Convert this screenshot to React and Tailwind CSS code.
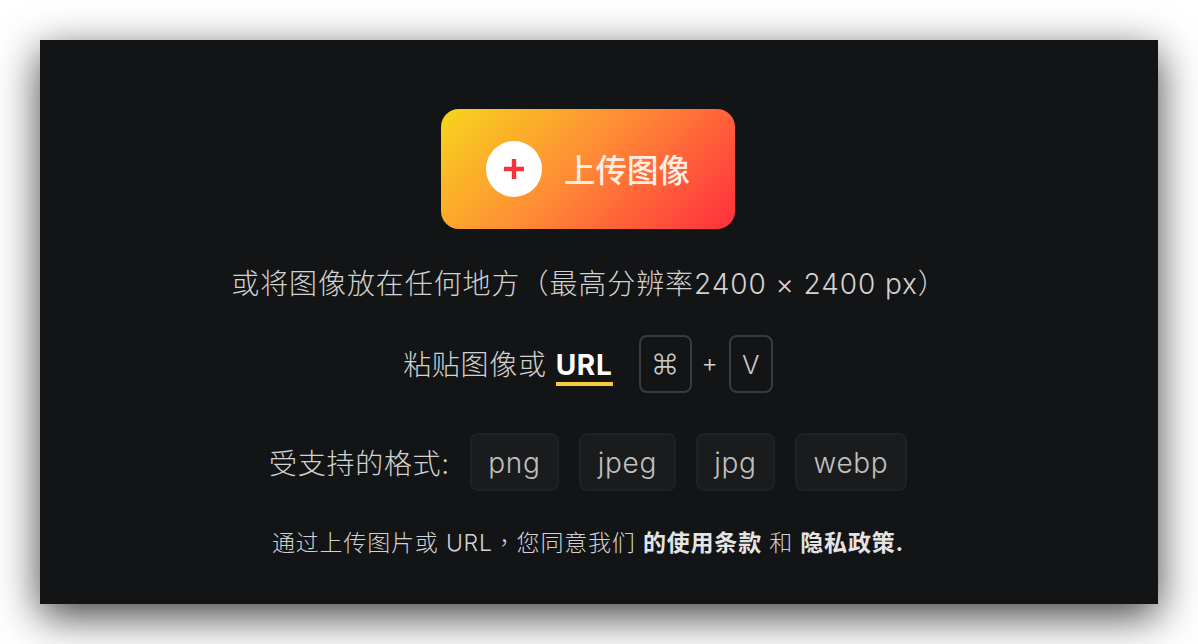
import React from "react";

const FONT = "font-['Inter','Noto_Sans_CJK_SC',sans-serif]";

const formats = [
  { name: "png", width: "w-[89px]" },
  { name: "jpeg", width: "w-[97px]" },
  { name: "jpg", width: "w-[79px]" },
  { name: "webp", width: "w-[112px]" },
];

const KeyCap = ({ children, className }) => (
  <span
    className={`flex h-[58px] items-center justify-center rounded-[8px] border-2 border-[#3a3b3d] text-[#c8c8c8] ${className}`}
  >
    {children}
  </span>
);

const App = () => (
  <div className={`h-[644px] w-[1198px] overflow-hidden bg-white p-10 ${FONT}`}>
    <div className="flex h-[564px] w-[1118px] flex-col items-center bg-[#131416] pt-[69px] pr-[22px] shadow-[0_12px_40px_rgba(0,0,0,0.75)]">
      <button className="flex h-[120px] w-[294px] items-center rounded-[18px] bg-[linear-gradient(135deg,#f7d51c_0%,#ff8d35_46%,#ff2e3e_100%)] pl-[45px]">
        <span className="flex h-14 w-14 items-center justify-center rounded-full bg-white">
          <svg width="20" height="20" viewBox="0 0 20 20">
            <path d="M10 0v20M0 10h20" stroke="#f5333f" strokeWidth="4.4" fill="none" />
          </svg>
        </span>
        <span className="mt-[3px] ml-[22px] text-[31.5px] leading-none font-medium text-[#ffeee4]">上传图像</span>
      </button>

      <p className="mt-[35px] ml-[2px] text-[28px] leading-10 font-light tracking-[0.033em] text-[#d2d2d2]">
        或将图像放在任何地方（最高分辨率2400 × 2400 px）
      </p>

      <div className="mt-[31px] flex h-[58px] items-center text-[28px] font-light tracking-[0.025em] text-[#d2d2d2]">
        <span className="mt-[2px]">粘贴图像或</span>
        <span className="mt-[6px] ml-[9px] border-b-4 border-[#f6cb3b] leading-[34px] font-bold text-white">
          URL
        </span>
        <KeyCap className="ml-[26px] w-[53px] text-[28px] tracking-normal">⌘</KeyCap>
        <span className="mr-[11px] ml-[10px] text-[25px] tracking-normal">+</span>
        <KeyCap className="w-[44px] text-[26px] tracking-normal">V</KeyCap>
      </div>

      <div className="mt-[40px] flex h-[58px] items-center font-light">
        <span className="mt-[3px] mr-[20px] text-[28px] tracking-[0.025em] text-[#d2d2d2]">受支持的格式:</span>
        <div className="flex gap-5">
          {formats.map((format) => (
            <span
              key={format.name}
              className={`flex h-[58px] items-center justify-center rounded-[8px] border-2 border-[#202123] bg-[#1a1b1d] pt-[2px] text-[28px] tracking-[0.025em] text-[#c0c0c0] ${format.width}`}
            >
              {format.name}
            </span>
          ))}
        </div>
      </div>

      <p className="mt-[34px] text-[23px] leading-8 font-light tracking-[0.035em] text-[#d2d2d2]">
        通过上传图片或 URL<span className="font-['Noto_Sans_CJK_TC',sans-serif]">，</span>您同意我们{" "}
        <b className="font-bold text-[#e4e4e4]">的使用条款</b> 和 <b className="font-bold text-[#e4e4e4]">隐私政策.</b>
      </p>
    </div>
  </div>
);

export default App;
